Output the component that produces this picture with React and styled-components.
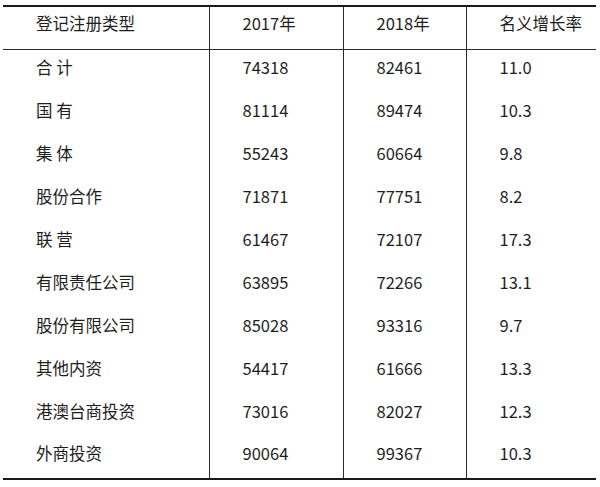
import React from 'react';
import styled, { createGlobalStyle } from 'styled-components';

const GlobalStyle = createGlobalStyle`
  html, body {
    margin: 0;
    padding: 0;
    background: #fff;
  }
  body {
    font-family: 'Noto Sans CJK SC', 'Liberation Sans', sans-serif;
    color: #1e1e1e;
  }
`;

const Wrapper = styled.div`
  padding: 5px 4px 0 3px;
  width: 600px;
  height: 487px;
  box-sizing: border-box;
`;

const Table = styled.table`
  width: 593px;
  border-collapse: collapse;
  table-layout: fixed;
  border-top: 2px solid #1a1a1a;
  border-bottom: 2px solid #1a1a1a;
`;

const HeadRow = styled.tr`
  height: 43px;
  border-bottom: 1.5px solid #2a2a2a;
`;

const Row = styled.tr`
  height: 43px;
`;

const Cell = styled.td`
  padding: 0 0 8px 33px;
  font-size: 16.5px;
  line-height: 20px;
  vertical-align: middle;
  white-space: nowrap;
  border-left: ${(p) => (p.$first ? 'none' : '1px solid #2a2a2a')};
`;

const HeadCell = styled(Cell).attrs({ as: 'th' })`
  font-weight: normal;
  text-align: left;
  padding-bottom: 9px;
`;

const rows = [
  ['合 计', '74318', '82461', '11.0'],
  ['国 有', '81114', '89474', '10.3'],
  ['集 体', '55243', '60664', '9.8'],
  ['股份合作', '71871', '77751', '8.2'],
  ['联 营', '61467', '72107', '17.3'],
  ['有限责任公司', '63895', '72266', '13.1'],
  ['股份有限公司', '85028', '93316', '9.7'],
  ['其他内资', '54417', '61666', '13.3'],
  ['港澳台商投资', '73016', '82027', '12.3'],
  ['外商投资', '90064', '99367', '10.3'],
];

const App = () => {
  return (
    <Wrapper>
      <GlobalStyle />
      <Table>
        <colgroup>
          <col style={{ width: 206 }} />
          <col style={{ width: 134 }} />
          <col style={{ width: 123 }} />
          <col style={{ width: 130 }} />
        </colgroup>
        <thead>
          <HeadRow>
            <HeadCell $first>登记注册类型</HeadCell>
            <HeadCell>2017年</HeadCell>
            <HeadCell>2018年</HeadCell>
            <HeadCell>名义增长率</HeadCell>
          </HeadRow>
        </thead>
        <tbody>
          {rows.map((r) => (
            <Row key={r[0]}>
              <Cell $first>{r[0]}</Cell>
              <Cell>{r[1]}</Cell>
              <Cell>{r[2]}</Cell>
              <Cell>{r[3]}</Cell>
            </Row>
          ))}
        </tbody>
      </Table>
    </Wrapper>
  );
};

export default App;
